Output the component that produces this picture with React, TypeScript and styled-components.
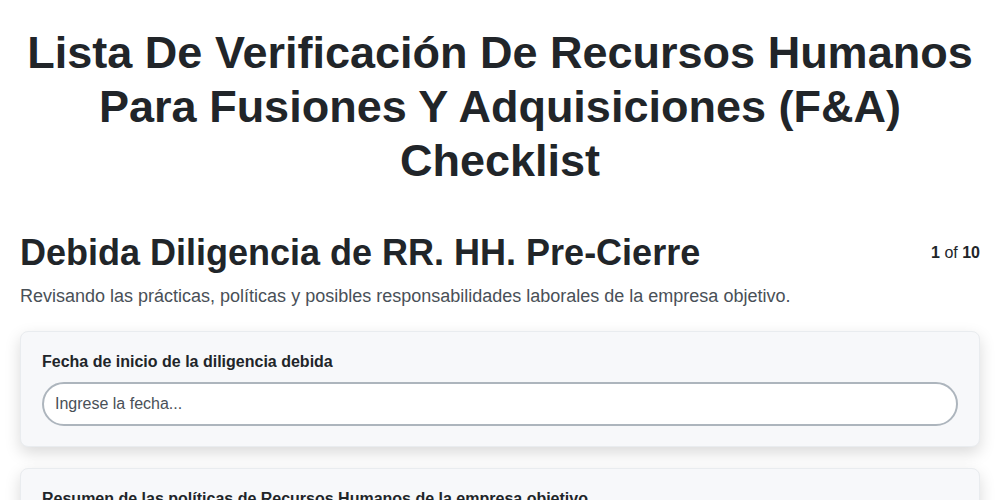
import React from "react";
import styled, { createGlobalStyle } from "styled-components";

const GlobalStyle = createGlobalStyle`
  html, body { margin: 0; padding: 0; background: #ffffff; }
  body { font-family: "Liberation Sans", Arial, sans-serif; color: #212529; }
  * { box-sizing: border-box; }
`;

const Page = styled.div`
  padding: 26px 20px 20px;
`;

const Title = styled.h1`
  margin: 0 0 43px;
  font-size: 45px;
  line-height: 54px;
  font-weight: 700;
  text-align: center;
  color: #212529;
`;

const SectionHeader = styled.div`
  display: flex;
  justify-content: space-between;
  align-items: center;
`;

const SectionTitle = styled.h2`
  margin: 0;
  font-size: 36px;
  line-height: 1.2;
  font-weight: 700;
  color: #212529;
`;

const Counter = styled.div`
  font-size: 16px;
  line-height: 24px;
  color: #212529;
  b { font-weight: 700; }
`;

const SectionDesc = styled.p`
  margin: 9px 0 21px;
  font-size: 18px;
  line-height: 27px;
  color: #495057;
`;

const Card = styled.div`
  background: #f7f8fa;
  border: 1px solid #e9ecef;
  border-radius: 8px;
  padding: 20px 21px;
  margin-bottom: 21px;
  box-shadow: 0 6px 16px rgba(0, 0, 0, 0.15);
`;

const Label = styled.label`
  display: block;
  font-size: 16px;
  line-height: 1.2;
  font-weight: 700;
  color: #212529;
  margin-bottom: 11px;
`;

const Input = styled.input`
  display: block;
  width: 100%;
  height: 44px;
  padding: 0 11px;
  border: 2px solid #adb5bd;
  border-radius: 22px;
  background: #ffffff;
  font-family: "Liberation Sans", Arial, sans-serif;
  font-size: 16px;
  color: #212529;
  outline: none;
  &::placeholder { color: #495057; opacity: 1; }
`;

export default function App() {
  return (
    <>
      <GlobalStyle />
      <Page>
        <Title>
          Lista De Verificación De Recursos Humanos Para Fusiones Y Adquisiciones (F&amp;A) Checklist
        </Title>
        <SectionHeader>
          <SectionTitle>Debida Diligencia de RR. HH. Pre-Cierre</SectionTitle>
          <Counter>
            <b>1</b> of <b>10</b>
          </Counter>
        </SectionHeader>
        <SectionDesc>
          Revisando las prácticas, políticas y posibles responsabilidades laborales de la empresa objetivo.
        </SectionDesc>
        <Card>
          <Label htmlFor="f1">Fecha de inicio de la diligencia debida</Label>
          <Input id="f1" placeholder="Ingrese la fecha..." />
        </Card>
        <Card>
          <Label htmlFor="f2">Resumen de las políticas de Recursos Humanos de la empresa objetivo</Label>
          <Input id="f2" placeholder="Ingrese el resumen..." />
        </Card>
      </Page>
    </>
  );
}
